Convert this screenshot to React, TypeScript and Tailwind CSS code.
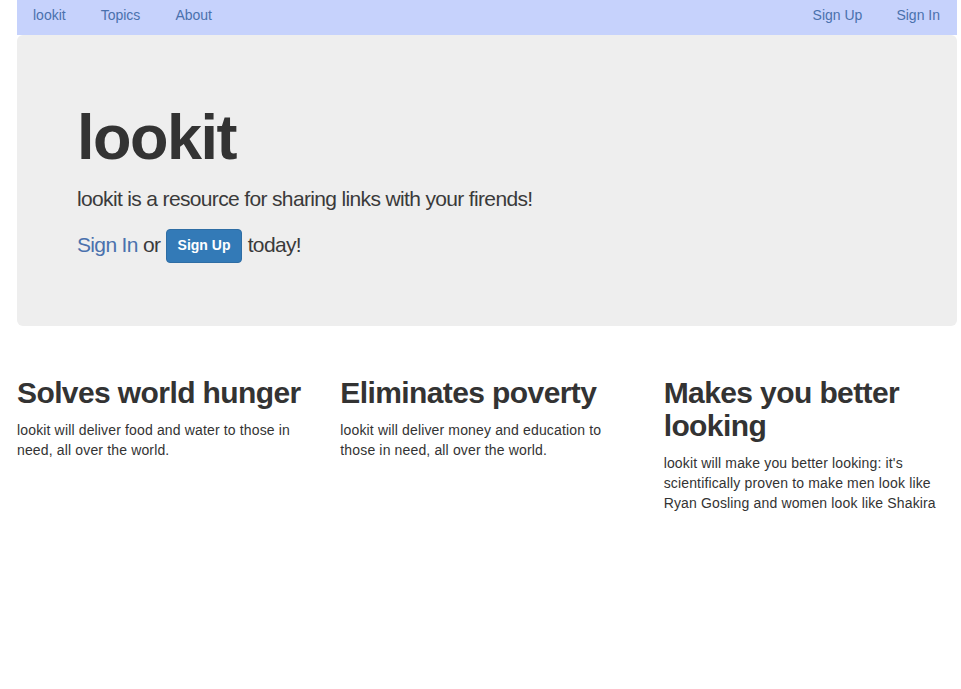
export default function App() {
  const features = [
    {
      title: "Solves world hunger",
      text: "lookit will deliver food and water to those in need, all over the world.",
    },
    {
      title: "Eliminates poverty",
      text: "lookit will deliver money and education to those in need, all over the world.",
    },
    {
      title: "Makes you better looking",
      text: "lookit will make you better looking: it's scientifically proven to make men look like Ryan Gosling and women look like Shakira",
    },
  ];

  return (
    <div
      className="min-h-screen bg-white text-[#333333]"
      style={{ fontFamily: '"Liberation Sans", Arial, sans-serif' }}
    >
      <div className="w-[940px] ml-[17px]">
        {/* Navbar */}
        <nav className="h-[35px] bg-[#c6d2fc] flex items-start justify-between pt-[5px] text-[14px] leading-[20px] text-[#4a71ad]">
          <ul className="flex items-center">
            <li className="pl-[16px] pr-[16px]"><a href="#">lookit</a></li>
            <li className="pl-[19px] pr-[17px]"><a href="#">Topics</a></li>
            <li className="pl-[18px] pr-[17px]"><a href="#">About</a></li>
          </ul>
          <ul className="flex items-center">
            <li className="px-[17px]"><a href="#">Sign Up</a></li>
            <li className="px-[17px]"><a href="#">Sign In</a></li>
          </ul>
        </nav>

        {/* Jumbotron */}
        <div className="bg-[#eeeeee] rounded-md px-[60px] pt-[48px] pb-[48px] mb-[30px]">
          <h1 className="mt-[20px] mb-[10px] text-[63px] leading-[1.1] font-bold tracking-[-1.5px]">lookit</h1>
          <p className="mt-[12px] mb-[15px] text-[21px] leading-[1.4] font-light tracking-[-0.65px] text-[#3a3a3a]">
            lookit is a resource for sharing links with your firends!
          </p>
          <p className="mb-[15px] text-[21px] leading-[1.4] font-light tracking-[-0.65px] text-[#3a3a3a]">
            <a href="#" className="text-[#4a71ad]">Sign In</a> or{" "}
            <button className="bg-[#337ab7] border border-[#2e6da4] text-white text-[14px] font-bold tracking-normal rounded-[4px] px-[11px] h-[34px] align-middle">
              Sign Up
            </button>{" "}
            today!
          </p>
        </div>

        {/* Features */}
        <div className="grid grid-cols-3 gap-x-[30px]">
          {features.map((f) => (
            <div key={f.title} className="w-[293px]">
              <h2 className="mt-[20px] mb-[11px] text-[30px] leading-[1.1] font-semibold tracking-[-0.6px]">
                {f.title}
              </h2>
              <p className="text-[14px] leading-[20px] tracking-[0.15px]">{f.text}</p>
            </div>
          ))}
        </div>
      </div>
    </div>
  );
}
